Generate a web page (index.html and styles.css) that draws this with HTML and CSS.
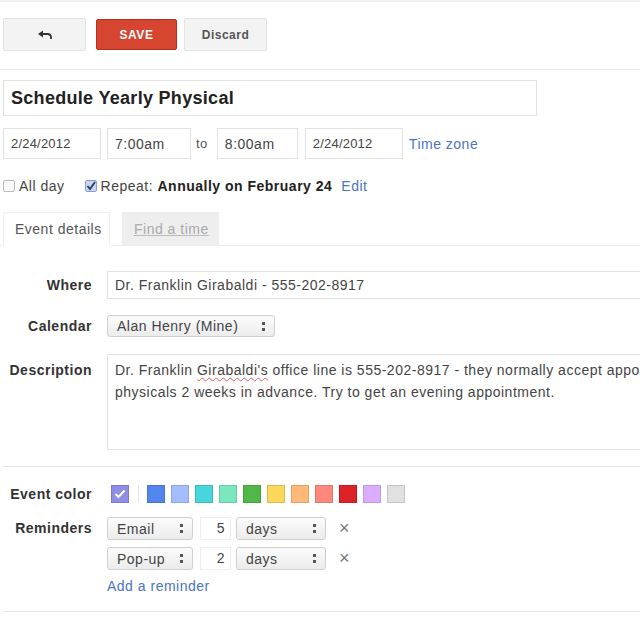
FILE: index.html
```html
<!DOCTYPE html>
<html>
<head>
<meta charset="utf-8">
<link rel="stylesheet" href="styles.css">
</head>
<body>
<div class="page">
  <div class="toolbar">
    <button class="btn btn-back" aria-label="Back">
      <svg width="16" height="10" viewBox="0 0 16 10"><path d="M1 4 L6 0.5 L6 7.5 Z" fill="#333"/><path d="M5 4 H10.5 Q14 4 14 7.5 V9" fill="none" stroke="#333" stroke-width="1.8"/></svg>
    </button>
    <button class="btn btn-save">SAVE</button>
    <button class="btn btn-discard">Discard</button>
  </div>

  <div class="main">
    <div class="title-box">Schedule Yearly Physical</div>

    <div class="when-row">
      <div class="field f-date">2/24/2012</div>
      <div class="field f-time">7:00am</div>
      <span class="to">to</span>
      <div class="field f-time2">8:00am</div>
      <div class="field f-date">2/24/2012</div>
      <a class="link tz">Time zone</a>
    </div>

    <div class="check-row">
      <span class="cb"></span><span class="cb-label">All day</span>
      <span class="cb cb-on"><svg width="10" height="10" viewBox="0 0 10 10"><path d="M1.5 5 L4 8 L9 1" fill="none" stroke="#2a3a66" stroke-width="1.8"/></svg></span><span class="cb-label">Repeat: <b>Annually on February 24</b></span>
      <a class="link edit">Edit</a>
    </div>

    <div class="tabs">
      <div class="tab tab-active">Event details</div>
      <div class="tab tab-off"><u>Find a time</u></div>
    </div>

    <div class="form">
      <div class="label l-where">Where</div>
      <div class="field f-where">Dr. Franklin Girabaldi - 555-202-8917</div>

      <div class="label l-cal">Calendar</div>
      <div class="ctl-row"><div class="select s-cal">Alan Henry (Mine)<span class="arr"></span></div></div>

      <div class="label l-desc">Description</div>
      <div class="field f-desc">Dr. Franklin <span class="spell">Girabaldi's</span> office line is 555-202-8917 - they normally accept appointments for<br>physicals 2 weeks in advance. Try to get an evening appointment.</div>
    </div>

    <div class="sep sep1"></div>

    <div class="form form2">
      <div class="label l-color">Event color</div>
      <div class="swatches">
        <span class="sw sw-checked"><svg width="12" height="10" viewBox="0 0 12 10"><path d="M1.5 5 L4.5 8 L10.5 1.5" fill="none" stroke="#fff" stroke-width="2"/></svg></span>
        <span class="sw-sep"></span>
        <span class="sw" style="background:#5484ed"></span>
        <span class="sw" style="background:#a4bdfc"></span>
        <span class="sw" style="background:#46d6db"></span>
        <span class="sw" style="background:#7ae7bf"></span>
        <span class="sw" style="background:#51b749"></span>
        <span class="sw" style="background:#fbd75b"></span>
        <span class="sw" style="background:#ffb878"></span>
        <span class="sw" style="background:#ff887c"></span>
        <span class="sw" style="background:#dc2127"></span>
        <span class="sw" style="background:#dbadff"></span>
        <span class="sw" style="background:#e1e1e1"></span>
      </div>

      <div class="label l-rem">Reminders</div>
      <div class="reminders">
        <div class="rem-row">
          <div class="select s-method">Email<span class="arr"></span></div>
          <div class="num">5</div>
          <div class="select s-unit">days<span class="arr"></span></div>
          <span class="x">×</span>
        </div>
        <div class="rem-row">
          <div class="select s-method">Pop-up<span class="arr"></span></div>
          <div class="num">2</div>
          <div class="select s-unit">days<span class="arr"></span></div>
          <span class="x">×</span>
        </div>
        <a class="link add">Add a reminder</a>
      </div>
    </div>

    <div class="sep sep2"></div>
  </div>
</div>
</body>
</html>
```

FILE: styles.css
```css
html, body {
  margin: 0;
  padding: 0;
  background: #fff;
}
body {
  font-family: "Liberation Sans", Arial, sans-serif;
  font-size: 14px;
  letter-spacing: 0.5px;
  color: #333;
  overflow: hidden;
}
.page {
  width: 640px;
  height: 631px;
  overflow: hidden;
  border-top: 2px solid #f0f0f0;
  box-sizing: border-box;
}
.toolbar {
  display: flex;
  align-items: center;
  padding: 16px 0 18px 3px;
  border-bottom: 1px solid #e8e8e8;
  height: 33px;
}
.btn {
  box-sizing: border-box;
  height: 33px;
  border: 1px solid #e3e3e3;
  background: #f3f3f3;
  border-radius: 2px;
  font-family: "Liberation Sans", Arial, sans-serif;
  font-size: 12px;
  font-weight: bold;
  letter-spacing: 0.5px;
  color: #555;
  display: flex;
  align-items: center;
  justify-content: center;
  padding: 0;
}
.btn-back { width: 83px; }
.btn-save {
  width: 81px;
  height: 31px;
  margin-left: 10px;
  background: #d6452f;
  border: 1px solid #b93020;
  color: #fff;
  font-size: 12px;
}
.btn-discard { width: 83px; margin-left: 7px; }

.main {
  padding-left: 3px;
}
.title-box {
  box-sizing: border-box;
  margin-top: 10px;
  width: 534px;
  height: 36px;
  border: 1px solid #e2e2e2;
  padding-left: 7px;
  display: flex;
  align-items: center;
  font-size: 18px;
  letter-spacing: 0.3px;
  font-weight: bold;
  color: #222;
}
.field {
  box-sizing: border-box;
  border: 1px solid #e2e2e2;
  background: #fff;
  padding-left: 7px;
  display: flex;
  align-items: center;
  color: #444;
}
.when-row {
  display: flex;
  align-items: center;
  margin-top: 12px;
  height: 31px;
}
.when-row .field { height: 31px; font-size: 14px; }
.f-date { width: 98px; font-size: 13px !important; letter-spacing: 0.2px; }
.f-time { width: 84px; margin-left: 6px; }
.to { margin: 0 9px 0 5px; font-size: 13px; color: #555; }
.f-time2 { width: 81px; margin-right: 7px; }
.link { color: #4a74c4; cursor: pointer; }
.tz { margin-left: 6px; font-size: 14px; }

.check-row {
  display: flex;
  align-items: center;
  margin-top: 16px;
  height: 22px;
  font-size: 14px;
  color: #444;
}
.cb {
  box-sizing: border-box;
  width: 12px;
  height: 12px;
  border: 1px solid #bbb;
  border-radius: 2px;
  background: #fafafa;
  display: inline-flex;
  align-items: center;
  justify-content: center;
}
.cb-on {
  margin-left: 20px;
  background: #c9d6f0;
  border-color: #8a9cc8;
}
.cb-label { margin-left: 4px; }
.cb-label b { color: #222; }
.edit { margin-left: 9px; font-size: 14px; }

.tabs {
  display: flex;
  align-items: flex-end;
  margin-top: 15px;
  margin-left: -3px;
  padding-left: 3px;
  height: 33px;
  border-bottom: 1px solid #eee;
  width: 640px;
}
.tab {
  box-sizing: border-box;
  height: 33px;
  display: flex;
  align-items: center;
  font-size: 14px;
}
.tab-active {
  width: 107px;
  padding-left: 11px;
  border: 1px solid #eee;
  border-bottom: 1px solid #fff;
  margin-bottom: -1px;
  height: 34px;
  color: #555;
}
.tab-off {
  width: 97px;
  margin-left: 12px;
  padding-left: 12px;
  background: #eeeeee;
  color: #aaa;
}
.tab-off u { text-decoration-color: #bbb; }

.form {
  display: grid;
  grid-template-columns: 89px 1fr;
  column-gap: 15px;
  align-items: center;
  margin-top: 25px;
}
.label {
  text-align: right;
  font-weight: bold;
  font-size: 14px;
  color: #333;
}
.f-where {
  width: 560px;
  height: 28px;
  font-size: 14px;
}
.l-cal { margin-top: 16px; }
.ctl-row { margin-top: 16px; }
.select {
  box-sizing: border-box;
  position: relative;
  display: flex;
  align-items: center;
  height: 22px;
  padding-left: 9px;
  border: 1px solid #d0d0d0;
  border-radius: 3px;
  background: linear-gradient(#fbfbfb, #ececec);
  font-size: 14px;
  color: #444;
}
.arr {
  position: absolute;
  right: 8px;
  top: 5px;
  width: 5px;
  height: 10px;
  background:
    linear-gradient(#555, #555) 1px 1px / 3px 3px no-repeat,
    linear-gradient(#555, #555) 1px 7px / 3px 3px no-repeat;
}
.s-cal { width: 168px; }
.l-desc { align-self: start; margin-top: 25px; }
.f-desc {
  margin-top: 17px;
  width: 560px;
  height: 96px;
  display: block;
  padding: 4px 0 0 7px;
  font-size: 14px;
  line-height: 22px;
  white-space: nowrap;
}
.spell {
  text-decoration: underline wavy #e06060;
  text-decoration-thickness: 1px;
  text-underline-offset: 2px;
}
.sep {
  height: 1px;
  background: #e6e6e6;
  width: 637px;
}
.sep1 { margin-top: 16px; }
.form2 { margin-top: 18px; align-items: start; }
.l-color { height: 18px; line-height: 18px; }
.swatches {
  display: flex;
  align-items: center;
  height: 18px;
  padding-left: 4px;
}
.sw {
  box-sizing: border-box;
  width: 18px;
  height: 18px;
  margin-right: 6px;
  border: 1px solid rgba(0,0,0,0.12);
  display: inline-flex;
  align-items: center;
  justify-content: center;
}
.sw-checked {
  background: #8e8ee6;
  border-color: #7a7ad0;
  margin-right: 9px;
}
.sw-sep {
  width: 1px;
  height: 18px;
  background: #e4e4e4;
  margin-right: 8px;
}
.l-rem { margin-top: 14px; height: 23px; line-height: 23px; }
.reminders { margin-top: 14px; }
.rem-row {
  display: flex;
  align-items: center;
  height: 23px;
  margin-bottom: 7px;
}
.s-method { width: 86px; height: 23px; }
.num {
  box-sizing: border-box;
  width: 31px;
  height: 23px;
  margin-left: 7px;
  border: 1px solid #eee;
  text-align: right;
  padding-right: 5px;
  line-height: 21px;
  font-size: 14px;
  color: #444;
}
.s-unit { width: 90px; height: 23px; margin-left: 5px; }
.x {
  margin-left: 13px;
  font-size: 18px;
  color: #777;
}
.add {
  display: block;
  margin-top: 5px;
  font-size: 14px;
  line-height: 18px;
}
.sep2 { margin-top: 16px; }
```
